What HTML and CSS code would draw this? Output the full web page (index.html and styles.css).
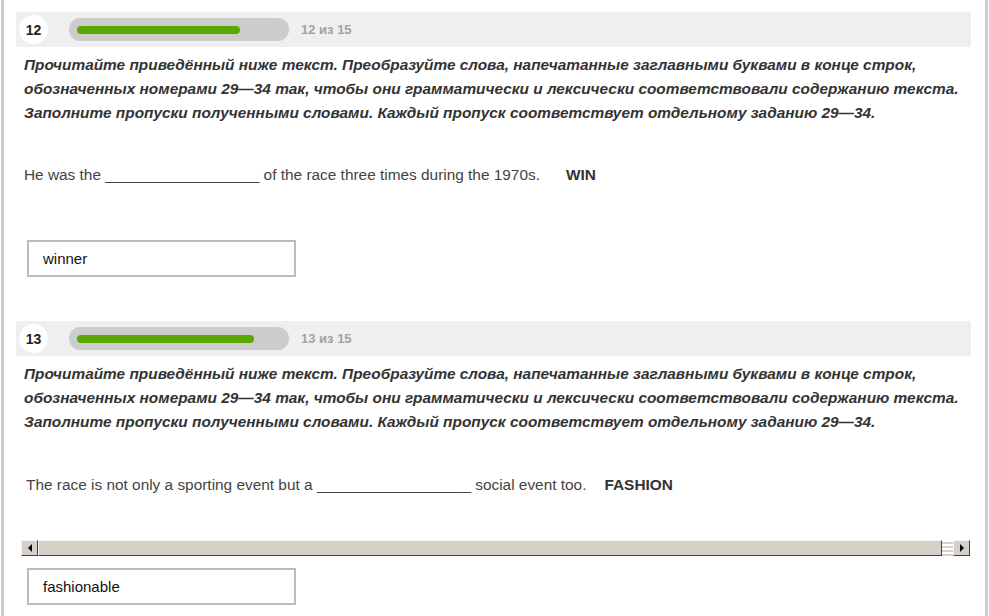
FILE: index.html
```html
<!DOCTYPE html>
<html lang="ru">

<head>
    <meta charset="UTF-8">
    <meta name="viewport" content="width=device-width, initial-scale=1.0">
    <title>Задания 12–13</title>
    <link rel="stylesheet" href="styles.css">
</head>

<body>
    <div class="page">
        <!-- Task 12 -->
        <div class="task">
            <div class="task-head">
                <div class="task-num">12</div>
                <div class="progress"><div class="progress-fill" style="width: 163px"></div></div>
                <div class="task-count">12 из 15</div>
            </div>
            <p class="task-text">Прочитайте приведённый ниже текст. Преобразуйте слова, напечатанные заглавными буквами в конце строк, обозначенных номерами 29—34 так, чтобы они грамматически и лексически соответствовали содержанию текста. Заполните пропуски полученными словами. Каждый пропуск соответствует отдельному заданию 29—34.</p>
            <p class="sentence">He was the __________________ of the race three times during the 1970s.<span class="keyword">WIN</span></p>
            <input class="answer" type="text" value="winner">
        </div>

        <!-- Task 13 -->
        <div class="task task-second">
            <div class="task-head">
                <div class="task-num">13</div>
                <div class="progress"><div class="progress-fill" style="width: 177px"></div></div>
                <div class="task-count">13 из 15</div>
            </div>
            <p class="task-text">Прочитайте приведённый ниже текст. Преобразуйте слова, напечатанные заглавными буквами в конце строк, обозначенных номерами 29—34 так, чтобы они грамматически и лексически соответствовали содержанию текста. Заполните пропуски полученными словами. Каждый пропуск соответствует отдельному заданию 29—34.</p>
            <p class="sentence sentence-wide">The race is not only a sporting event but a __________________ social event too.<span class="keyword keyword-near">FASHION</span></p>
            <div class="hscroll">
                <div class="sb-btn"><span class="arrow-left"></span></div>
                <div class="sb-thumb"></div>
                <div class="sb-track"></div>
                <div class="sb-btn"><span class="arrow-right"></span></div>
            </div>
            <input class="answer answer-tight" type="text" value="fashionable">
        </div>
    </div>
</body>

</html>
```

FILE: styles.css
```css
body {
    margin: 0;
    background-color: #ffffff;
    font-family: 'Liberation Sans', Arial, sans-serif;
}

.page {
    margin: 0 1px;
    height: 616px;
    box-sizing: border-box;
    border-left: 3px solid #cccccc;
    border-right: 3px solid #cccccc;
    padding: 12px 14px 0 12px;
    overflow: hidden;
}

.task-head {
    display: flex;
    align-items: center;
    height: 35px;
    background-color: #efefef;
}

.task-num {
    width: 29px;
    height: 29px;
    margin-left: 3px;
    border-radius: 50%;
    background-color: #ffffff;
    display: flex;
    justify-content: center;
    align-items: center;
    font-size: 14px;
    font-weight: bold;
    color: #222;
}

.progress {
    width: 220px;
    height: 23px;
    margin-left: 21px;
    box-sizing: border-box;
    padding: 0 8px;
    border-radius: 12px;
    background-color: #cccccc;
    display: flex;
    align-items: center;
}

.progress-fill {
    height: 8px;
    border-radius: 4px;
    background-color: #58a800;
}

.task-count {
    margin-left: 12px;
    font-size: 13px;
    font-weight: bold;
    color: #a3a3a3;
}

.task-text {
    margin: 6px 0 0;
    padding: 0 8px;
    font-size: 15.4px;
    font-weight: bold;
    font-style: italic;
    line-height: 24px;
    color: #333;
}

.sentence {
    margin: 40px 0 0;
    padding-left: 8px;
    font-size: 15.4px;
    line-height: 20px;
    color: #444;
}

.sentence-wide {
    margin-top: 41px;
    padding-left: 10px;
}

.keyword {
    margin-left: 26px;
    font-weight: bold;
    color: #333;
}

.keyword-near {
    margin-left: 18px;
}

.answer {
    display: block;
    margin: 55px 0 0 11px;
    width: 269px;
    height: 37px;
    box-sizing: border-box;
    border: 2px solid #bbbbbb;
    padding: 0 0 0 14px;
    font-family: 'Liberation Sans', Arial, sans-serif;
    font-size: 15px;
    color: #111;
    outline: none;
}

.task-second {
    margin-top: 44px;
}

.answer-tight {
    margin-top: 12px;
}

/* old-style horizontal scrollbar */
.hscroll {
    display: flex;
    height: 16px;
    margin: 45px 1px 0 5px;
    background-color: #d4d0c8;
}

.sb-btn {
    width: 17px;
    height: 16px;
    box-sizing: border-box;
    border-top: 1px solid #f4f3ee;
    border-left: 1px solid #f4f3ee;
    border-right: 1px solid #404040;
    border-bottom: 1px solid #404040;
    background-color: #d4d0c8;
    display: flex;
    justify-content: center;
    align-items: center;
}

.arrow-left {
    width: 0;
    height: 0;
    border-top: 4px solid transparent;
    border-bottom: 4px solid transparent;
    border-right: 4px solid #000;
}

.arrow-right {
    width: 0;
    height: 0;
    border-top: 4px solid transparent;
    border-bottom: 4px solid transparent;
    border-left: 4px solid #000;
}

.sb-thumb {
    flex: 1;
    box-sizing: border-box;
    border-top: 1px solid #f4f3ee;
    border-left: 1px solid #f4f3ee;
    border-right: 1px solid #404040;
    border-bottom: 1px solid #404040;
    background-color: #d4d0c8;
}

.sb-track {
    width: 11px;
    background: repeating-linear-gradient(to bottom, #ffffff 0, #ffffff 2px, #d4d0c8 2px, #d4d0c8 4px);
}
```
